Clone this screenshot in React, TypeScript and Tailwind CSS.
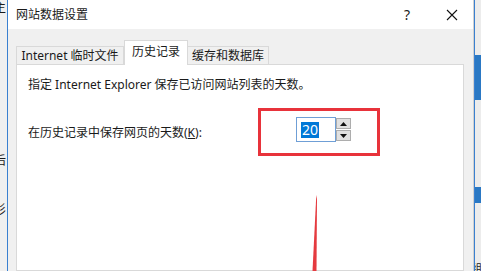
import React from "react";

const font = { fontFamily: '"Noto Sans", "Noto Sans CJK SC", sans-serif' };

export default function App() {
  return (
    <div
      className="relative w-[481px] h-[271px] overflow-hidden flex bg-[#f0f0f0] text-[12px] text-[#1a1a1a]"
      style={font}
    >
      {/* left background window strip */}
      <div className="w-[7px] h-full bg-[#f0f0f0] overflow-hidden flex flex-col">
        <span className="ml-[-6px] mt-[1px] leading-[14px] text-[12px]">主</span>
        <span className="ml-[-6px] mt-[139px] leading-[14px] text-[12px]">后</span>
        <span className="ml-[-6px] mt-[35px] leading-[14px] text-[12px]">杉</span>
      </div>
      <div className="w-px h-full bg-[#3a80d0]" />

      {/* dialog */}
      <div className="w-[465px] h-full flex flex-col">
        <div className="h-[29px] bg-white flex items-center pl-[8px] shrink-0">
          <span className="leading-[14px]">网站数据设置</span>
          <span className="ml-auto mr-[36px] text-[14px] leading-[14px]">?</span>
          <svg width="12" height="12" viewBox="0 0 12 12" className="mr-[15px]">
            <path d="M1 1 L11 11 M11 1 L1 11" stroke="#111" strokeWidth="1.1" />
          </svg>
        </div>
        <div className="flex-1 bg-[#f0f0f0] pl-[8px] pr-[9px] pt-[11px] flex flex-col">
          {/* tabs */}
          <div className="flex items-end h-[24px] relative z-10">
            <div className="h-[18px] w-[108px] border border-b-0 border-[#d9d9d9] bg-[#f0f0f0] flex items-center justify-center leading-[14px]">
              Internet 临时文件
            </div>
            <div className="h-[25px] w-[64px] mb-[-1px] border border-b-0 border-[#d9d9d9] bg-white flex items-center justify-center leading-[14px] pb-[2px]">
              历史记录
            </div>
            <div className="h-[18px] w-[81px] border border-b-0 border-l-0 border-[#d9d9d9] bg-[#f0f0f0] flex items-center justify-center leading-[14px]">
              缓存和数据库
            </div>
          </div>
          <div className="flex-1 bg-white border border-[#d9d9d9] pl-[11px] pt-[13px] flex flex-col">
            <div className="leading-[14px]">指定 Internet Explorer 保存已访问网站列表的天数。</div>
            <div className="flex items-center mt-[16px]">
              <div className="w-[230px] leading-[14px] pt-[2px]">
                在历史记录中保存网页的天数(<span className="underline">K</span>):
              </div>
              <div className="w-[122px] h-[48px] border-[3px] border-[#e8333b] flex items-start pl-[35px] pt-[6px]">
                <div className="w-[40px] h-[25px] border border-[#6f9fd6] bg-white flex items-center pl-[4px]">
                  <span className="bg-[#0078d7] text-white text-[14px] leading-[16px] px-[1px]">20</span>
                </div>
                <div className="w-[15px] h-[25px] flex flex-col gap-px pt-px">
                  <div className="h-[11px] bg-[#e1e1e1] border border-[#adadad] flex items-center justify-center">
                    <svg width="7" height="4" viewBox="0 0 7 4"><path d="M0 4 L3.5 0 L7 4 Z" fill="#111" /></svg>
                  </div>
                  <div className="h-[11px] bg-[#e1e1e1] border border-[#adadad] flex items-center justify-center">
                    <svg width="7" height="4" viewBox="0 0 7 4"><path d="M0 0 L3.5 4 L7 0 Z" fill="#111" /></svg>
                  </div>
                </div>
              </div>
            </div>
          </div>
        </div>
      </div>

      {/* right background */}
      <div className="w-px h-full bg-[#d0d0d0]" />
      <div className="w-px h-full bg-[#3a80d0]" />
      <div className="flex-1 h-full flex flex-col bg-[#ececec] overflow-hidden">
        <div className="h-[55px]" />
        <div className="h-[45px] bg-[#2a78c4]" />
        <div className="h-[87px]" />
        <div className="h-[16px] bg-[#2a78c4]" />
        <div className="flex-1 flex items-end">
          <span className="text-[10px] leading-[10px] ml-[-3px] mb-[-2px]">组</span>
        </div>
      </div>

      {/* red arrow */}
      <svg className="absolute left-0 top-0 pointer-events-none" width="481" height="271">
        <polygon points="316.3,195 317,199 316.5,271 312.5,271" fill="#e53a3f" />
      </svg>
    </div>
  );
}
